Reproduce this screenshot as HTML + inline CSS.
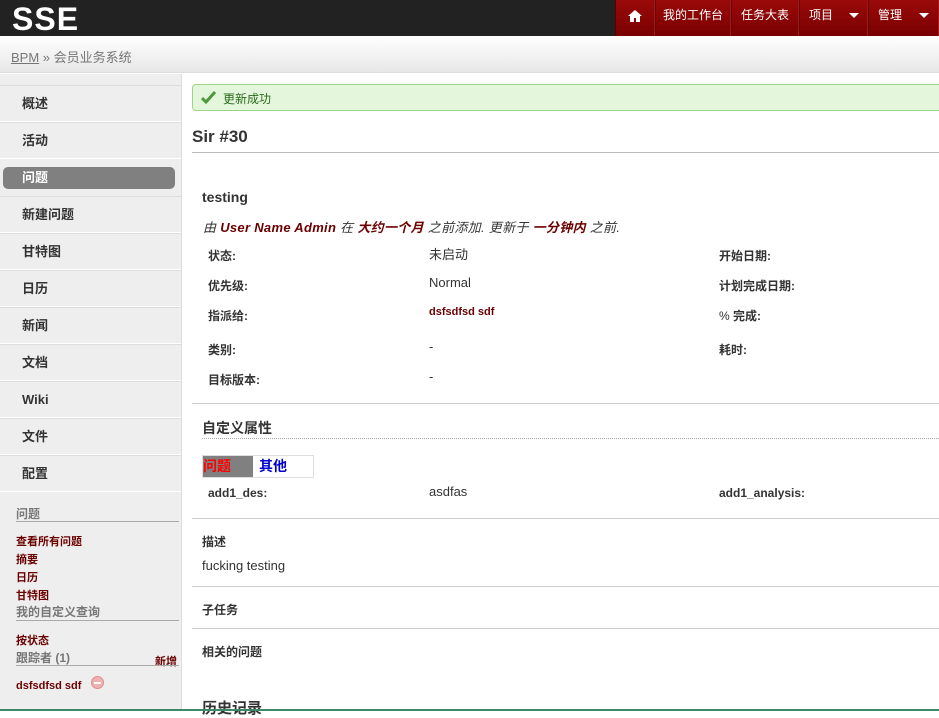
<!DOCTYPE html>
<html><head><meta charset="utf-8">
<style>
*{margin:0;padding:0;box-sizing:border-box}
body{width:939px;height:711px;overflow:hidden;background:#fff;font-family:"Liberation Sans","Noto Sans CJK SC",sans-serif;font-size:13px;color:#333;position:relative}
.a{position:absolute;white-space:nowrap}
#top{position:absolute;left:0;top:0;width:939px;height:36px;background:#222}
#logo{left:12px;top:1px;font-size:32px;font-weight:bold;color:#fff;letter-spacing:1px}
#nav{position:absolute;left:615px;top:0;width:324px;height:36px;background:linear-gradient(#9a0a0a,#7a0000);display:flex}
#nav div{height:36px;line-height:30px;color:#fff;font-size:12px;border-left:1px solid #5a0000;border-right:1px solid #a81818;text-align:center}
#bc{position:absolute;left:0;top:36px;width:939px;height:37px;background:linear-gradient(#fff,#e7e7e7);border-bottom:1px solid #ddd}
#side{position:absolute;left:0;top:74px;width:182px;height:637px;background:#eee;border-right:1px solid #ddd}
.mi{position:absolute;left:0;width:181px;height:37px;border-bottom:1px solid #fff;border-top:1px solid #ddd;font-weight:bold;font-size:13px;line-height:36px;padding-left:22px;color:#333}
.lb{font-weight:bold;font-size:12px}
.red{color:#6b0000}
.hr{position:absolute;height:1px;background:#ccc}
.car{position:absolute;top:13px;border:5px solid transparent;border-top-color:#fff;border-bottom:0}
</style></head><body>
<div id="top"></div>
<div class="a" id="logo">SSE</div>
<div id="nav">
<div style="width:40px"><svg width="14" height="12" viewBox="0 0 14 12" style="margin-top:10px"><path d="M7 0L0 6h2v6h4V8h2v4h4V6h2z" fill="#fff"/></svg></div>
<div style="width:76px">我的工作台</div>
<div style="width:68px">任务大表</div>
<div style="width:69px;text-align:left;padding-left:9px;position:relative">项目<span class="car" style="left:49px"></span></div>
<div style="width:71px;text-align:left;padding-left:9px;position:relative">管理<span class="car" style="left:50px"></span></div>
</div>
<div id="bc"></div>
<div class="a" style="left:11px;top:47px;font-size:13px;color:#777"><u>BPM</u> » 会员业务系统</div>
<div id="side"></div>
<div class="mi" style="top:85px">概述</div>
<div class="mi" style="top:122px">活动</div>
<div class="a" style="left:3px;top:167px;width:172px;height:22px;background:#808080;border-radius:5px;color:#fff;font-weight:bold;line-height:22px;padding-left:19px">问题</div>
<div class="mi" style="top:196px">新建问题</div>
<div class="mi" style="top:233px">甘特图</div>
<div class="mi" style="top:270px">日历</div>
<div class="mi" style="top:307px">新闻</div>
<div class="mi" style="top:344px">文档</div>
<div class="mi" style="top:381px">Wiki</div>
<div class="mi" style="top:418px">文件</div>
<div class="mi" style="top:455px">配置</div>
<div class="a" style="left:16px;top:505px;color:#777;font-size:12px;font-weight:bold">问题</div>
<div class="hr" style="left:16px;top:521px;width:163px;background:#aaa"></div>
<div class="a lb red" style="left:16px;top:533px;font-size:11px">查看所有问题</div>
<div class="a lb red" style="left:16px;top:551px;font-size:11px">摘要</div>
<div class="a lb red" style="left:16px;top:569px;font-size:11px">日历</div>
<div class="a lb red" style="left:16px;top:587px;font-size:11px">甘特图</div>
<div class="a" style="left:16px;top:603px;color:#777;font-size:12px;font-weight:bold">我的自定义查询</div>
<div class="hr" style="left:16px;top:620px;width:163px;background:#aaa"></div>
<div class="a lb red" style="left:16px;top:632px;font-size:11px">按状态</div>
<div class="a" style="left:16px;top:649px;color:#777;font-size:12px;font-weight:bold">跟踪者 (1)</div>
<div class="a lb red" style="left:155px;top:653px;font-size:11px">新增</div>
<div class="hr" style="left:16px;top:665px;width:163px;background:#aaa"></div>
<div class="a lb red" style="left:16px;top:680px;font-size:11px">dsfsdfsd sdf</div>
<div class="a" style="left:91px;top:676px;width:13px;height:13px;border-radius:50%;background:#f0b0b0;border:1px solid #e09090"><div style="margin:5px 2px;height:2px;background:#fff"></div></div>

<div class="a" style="left:192px;top:84px;width:760px;height:27px;background:#e4f7dc;border:1px solid #9fd38a;border-radius:4px"></div>
<svg class="a" style="left:201px;top:91px" width="16" height="13" viewBox="0 0 16 13"><path d="M1 7l4 4 9-10" stroke="#4a9a3a" stroke-width="3" fill="none"/></svg>
<div class="a" style="left:223px;top:90px;font-size:12px;color:#2a6a1a">更新成功</div>
<div class="a" style="left:192px;top:127px;font-size:17px;font-weight:bold;color:#333">Sir #30</div>
<div class="hr" style="left:192px;top:152px;width:747px;background:#bbb"></div>
<div class="a" style="left:202px;top:189px;font-size:14px;font-weight:bold;color:#333">testing</div>
<div class="a" style="left:203px;top:217px;font-size:13px;font-style:italic;color:#333;letter-spacing:0.3px">由 <b class="red">User Name Admin</b> 在 <b class="red">大约一个月</b> 之前添加. 更新于 <b class="red">一分钟内</b> 之前.</div>
<div class="a lb" style="left:208px;top:247px">状态:</div>
<div class="a" style="left:429px;top:244px">未启动</div>
<div class="a lb" style="left:208px;top:277px">优先级:</div>
<div class="a" style="left:429px;top:275px">Normal</div>
<div class="a lb" style="left:208px;top:307px">指派给:</div>
<div class="a lb red" style="left:429px;top:306px;font-size:11px">dsfsdfsd sdf</div>
<div class="a lb" style="left:208px;top:341px">类别:</div>
<div class="a" style="left:429px;top:339px">-</div>
<div class="a lb" style="left:208px;top:371px">目标版本:</div>
<div class="a" style="left:429px;top:369px">-</div>
<div class="a lb" style="left:719px;top:247px">开始日期:</div>
<div class="a lb" style="left:719px;top:277px">计划完成日期:</div>
<div class="a lb" style="left:719px;top:307px"><span style="font-weight:normal">%</span> 完成:</div>
<div class="a lb" style="left:719px;top:341px">耗时:</div>
<div class="hr" style="left:192px;top:403px;width:747px"></div>
<div class="a" style="left:202px;top:418px;font-size:14px;font-weight:bold">自定义属性</div>
<div class="a" style="left:202px;top:438px;width:737px;border-top:1px dotted #aaa"></div>
<div class="a" style="left:202px;top:455px;width:112px;height:23px;border:1px solid #ddd"></div>
<div class="a" style="left:203px;top:456px;width:50px;height:21px;background:#808080;color:#f00;font-weight:bold;font-size:14px;line-height:21px">问题</div>
<div class="a" style="left:259px;top:456px;color:#00c;font-weight:bold;font-size:14px;line-height:21px">其他</div>
<div class="a lb" style="left:208px;top:486px">add1_des:</div>
<div class="a" style="left:429px;top:484px">asdfas</div>
<div class="a lb" style="left:719px;top:486px">add1_analysis:</div>
<div class="hr" style="left:192px;top:518px;width:747px"></div>
<div class="a lb" style="left:202px;top:533px">描述</div>
<div class="a" style="left:202px;top:558px">fucking testing</div>
<div class="hr" style="left:192px;top:586px;width:747px"></div>
<div class="a lb" style="left:202px;top:601px">子任务</div>
<div class="hr" style="left:192px;top:628px;width:747px"></div>
<div class="a lb" style="left:202px;top:643px">相关的问题</div>
<div class="a" style="left:202px;top:697px;font-size:15px;font-weight:bold">历史记录</div>
<div class="a" style="left:0;top:709px;width:939px;height:2px;background:#3a8a6a"></div>
</body></html>
